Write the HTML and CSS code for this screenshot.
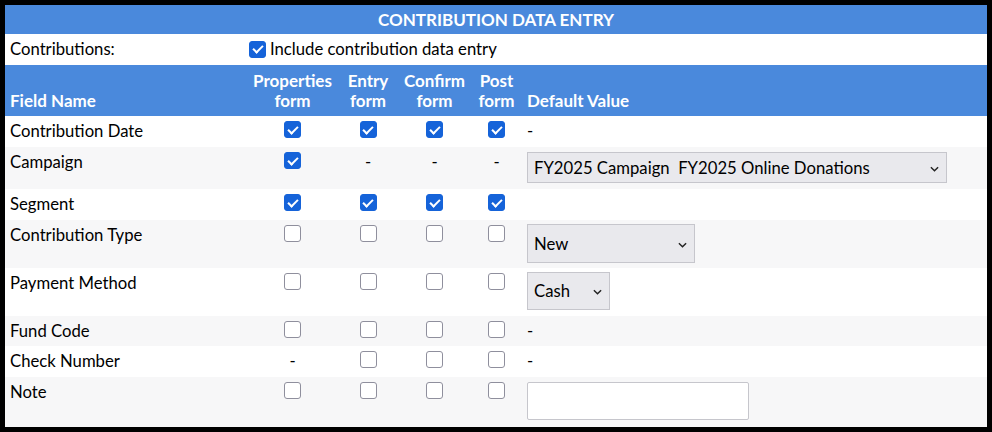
FILE: index.html
```html
<!DOCTYPE html>
<html>
<head>
<meta charset="utf-8">
<link rel="stylesheet" href="styles.css">
</head>
<body>
<div class="frame">
<table class="grid">
  <colgroup>
    <col class="c-name"><col class="c-prop"><col class="c-entry"><col class="c-conf"><col class="c-post"><col class="c-def">
  </colgroup>
  <tr class="r-title"><th colspan="6" class="title">CONTRIBUTION DATA ENTRY</th></tr>
  <tr class="r-contrib">
    <td class="name">Contributions:</td>
    <td colspan="5" class="incl"><div class="incl-wrap"><span class="cb on inline"></span><span class="incl-text">Include contribution data entry</span></div></td>
  </tr>
  <tr class="r-head">
    <th class="h-left">Field Name</th>
    <th class="h-mid">Properties<br>form</th>
    <th class="h-mid">Entry<br>form</th>
    <th class="h-mid">Confirm<br>form</th>
    <th class="h-mid">Post<br>form</th>
    <th class="h-left h-def">Default Value</th>
  </tr>
  <tr class="row white h31">
    <td class="name">Contribution Date</td>
    <td class="mid"><span class="cb on"></span></td>
    <td class="mid"><span class="cb on"></span></td>
    <td class="mid"><span class="cb on"></span></td>
    <td class="mid"><span class="cb on"></span></td>
    <td class="def">-</td>
  </tr>
  <tr class="row grey h42">
    <td class="name">Campaign</td>
    <td class="mid"><span class="cb on"></span></td>
    <td class="mid dash">-</td>
    <td class="mid dash">-</td>
    <td class="mid dash">-</td>
    <td class="def pad5"><span class="sel w-camp h31s">FY2025 Campaign&nbsp; FY2025 Online Donations<svg class="chev" viewBox="0 0 10 6" width="9" height="6"><path d="M1 1l4 4 4-4" fill="none" stroke="#222" stroke-width="1.6"/></svg></span></td>
  </tr>
  <tr class="row white h31">
    <td class="name">Segment</td>
    <td class="mid"><span class="cb on"></span></td>
    <td class="mid"><span class="cb on"></span></td>
    <td class="mid"><span class="cb on"></span></td>
    <td class="mid"><span class="cb on"></span></td>
    <td class="def"></td>
  </tr>
  <tr class="row grey h48">
    <td class="name">Contribution Type</td>
    <td class="mid"><span class="cb"></span></td>
    <td class="mid"><span class="cb"></span></td>
    <td class="mid"><span class="cb"></span></td>
    <td class="mid"><span class="cb"></span></td>
    <td class="def pad4"><span class="sel w-new h39s">New<svg class="chev" viewBox="0 0 10 6" width="9" height="6"><path d="M1 1l4 4 4-4" fill="none" stroke="#222" stroke-width="1.6"/></svg></span></td>
  </tr>
  <tr class="row white h48">
    <td class="name">Payment Method</td>
    <td class="mid"><span class="cb"></span></td>
    <td class="mid"><span class="cb"></span></td>
    <td class="mid"><span class="cb"></span></td>
    <td class="mid"><span class="cb"></span></td>
    <td class="def pad4"><span class="sel w-cash h38s">Cash<svg class="chev" viewBox="0 0 10 6" width="9" height="6"><path d="M1 1l4 4 4-4" fill="none" stroke="#222" stroke-width="1.6"/></svg></span></td>
  </tr>
  <tr class="row grey h30">
    <td class="name">Fund Code</td>
    <td class="mid"><span class="cb"></span></td>
    <td class="mid"><span class="cb"></span></td>
    <td class="mid"><span class="cb"></span></td>
    <td class="mid"><span class="cb"></span></td>
    <td class="def">-</td>
  </tr>
  <tr class="row white h31">
    <td class="name">Check Number</td>
    <td class="mid dash">-</td>
    <td class="mid"><span class="cb"></span></td>
    <td class="mid"><span class="cb"></span></td>
    <td class="mid"><span class="cb"></span></td>
    <td class="def">-</td>
  </tr>
  <tr class="row grey h50">
    <td class="name">Note</td>
    <td class="mid"><span class="cb"></span></td>
    <td class="mid"><span class="cb"></span></td>
    <td class="mid"><span class="cb"></span></td>
    <td class="mid"><span class="cb"></span></td>
    <td class="def pad5"><span class="textbox"></span></td>
  </tr>
</table>
</div>
</body>
</html>
```

FILE: styles.css
```css
html, body {
  margin: 0;
  padding: 0;
  background: #000;
}
body {
  padding: 5px;
  font-family: Lato, "Open Sans", sans-serif;
  font-size: 16.7px;
  color: #000;
}
.frame {
  width: 982px;
  height: 422px;
  background: #fff;
  overflow: hidden;
}
.grid {
  width: 982px;
  border-collapse: collapse;
  border-spacing: 0;
  table-layout: fixed;
}
.c-name { width: 243px; }
.c-prop { width: 89px; }
.c-entry { width: 62px; }
.c-conf { width: 71px; }
.c-post { width: 53px; }
.c-def { width: 464px; }

td, th {
  padding: 0;
  vertical-align: top;
  line-height: 20px;
}

.r-title { height: 29px; background: #4a89dc; }
.title {
  color: #fff;
  font-weight: 700;
  font-size: 17px;
  text-align: center;
  vertical-align: middle;
}

.r-contrib { height: 31px; }
.r-contrib td { padding-top: 5px; }
.incl-wrap {
  display: flex;
  align-items: center;
  padding-left: 1px;
  white-space: nowrap;
}
.incl-text { margin-left: 4px; }

.r-head { height: 51px; background: #4a89dc; }
.r-head th {
  color: #fff;
  font-weight: 700;
  font-size: 17px;
  vertical-align: bottom;
  line-height: 20px;
  padding-bottom: 5px;
  white-space: nowrap;
}
.h-left { text-align: left; padding-left: 5px; }
.h-def { padding-left: 4px; }
.h-mid { text-align: center; }

.white { background: #fff; }
.grey { background: #f7f7f8; }
.h30 { height: 30px; }
.h31 { height: 31px; }
.h42 { height: 42px; }
.h48 { height: 48px; }
.h50 { height: 50px; }

.row td { padding-top: 5px; }
.name { padding-left: 5px; white-space: nowrap; }
.mid { text-align: center; }
.row td.mid { padding-top: 4px; }
.row td.mid.dash { padding-top: 5px; }
.row td.def { padding-left: 4px; padding-top: 5px; }
.row td.def.pad4 { padding-top: 4px; }
.row td.def.pad5 { padding-top: 5px; }

.cb {
  display: block;
  width: 15px;
  height: 15px;
  margin: 1px auto 0;
  border: 1px solid #8f8f9d;
  border-radius: 3px;
  background: #fff;
  position: relative;
}
.cb.inline {
  display: inline-block;
  margin: 0;
  flex: none;
}
.cb.on {
  background: #1563d9;
  border-color: #1563d9;
}
.cb.on::after {
  content: "";
  position: absolute;
  left: 4.5px;
  top: 1.5px;
  width: 4px;
  height: 8px;
  border-right: 2.4px solid #fff;
  border-bottom: 2.4px solid #fff;
  transform: rotate(45deg);
}

.sel {
  display: flex;
  align-items: center;
  box-sizing: border-box;
  background: #e9e9ed;
  border: 1px solid #c6c6cc;
  padding-left: 6px;
  position: relative;
  white-space: nowrap;
}
.w-camp { width: 420px; }
.w-new { width: 168px; }
.w-cash { width: 83px; }
.h31s { height: 31px; }
.h39s { height: 39px; }
.h38s { height: 38px; }
.chev {
  position: absolute;
  right: 7px;
  top: 50%;
  margin-top: -2px;
}

.textbox {
  display: block;
  box-sizing: border-box;
  width: 222px;
  height: 38px;
  background: #fff;
  border: 1px solid #c6c6cc;
  border-radius: 2px;
}
```
